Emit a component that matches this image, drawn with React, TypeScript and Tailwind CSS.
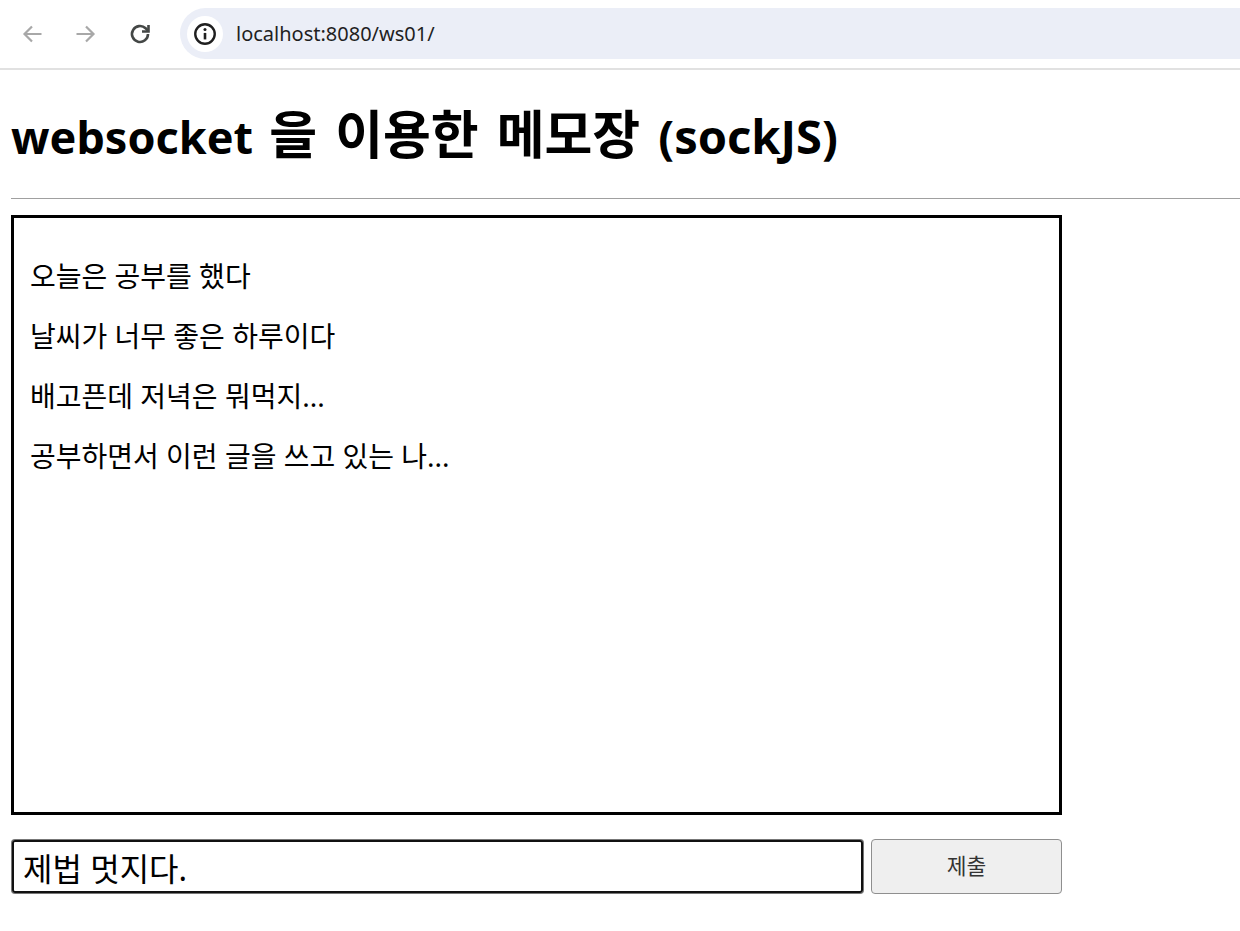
import { useState } from "react";

const FONT = "font-['Noto_Sans','Noto_Sans_CJK_KR',sans-serif]";

const memos = [
  "오늘은 공부를 했다",
  "날씨가 너무 좋은 하루이다",
  "배고픈데 저녁은 뭐먹지...",
  "공부하면서 이런 글을 쓰고 있는 나...",
];

function BrowserBar() {
  return (
    <div className="flex h-[70px] items-start border-b-2 border-[#e1e1e1] bg-white pt-[8px]">
      <div className="flex h-[51px] w-[180px] shrink-0 items-center pl-[20px]">
        <svg width="24" height="24" viewBox="0 0 24 24" fill="none" stroke="#a8a8a8" strokeWidth="2.2">
          <path d="M21.5 12H4.5M12 4.5 4.5 12l7.5 7.5" />
        </svg>
        <svg className="ml-[30px]" width="24" height="24" viewBox="0 0 24 24" fill="none" stroke="#a8a8a8" strokeWidth="2.2">
          <path d="M2.5 12h17M12 4.5l7.5 7.5-7.5 7.5" />
        </svg>
        <svg className="ml-[30px]" width="24" height="24" viewBox="0 0 24 24" fill="none" stroke="#444746" strokeWidth="2.6">
          <path d="M20 12a8 8 0 1 1-2.4-5.7l2.4 2.4" />
          <path d="M20.5 3V9.5H14" />
        </svg>
      </div>
      <div className="flex h-[51px] flex-1 items-center rounded-l-full bg-[#ebeef7] pl-[7px]">
        <div className="flex h-[36px] w-[36px] items-center justify-center rounded-full bg-white">
          <svg width="26" height="26" viewBox="0 0 24 24" fill="none">
            <circle cx="12" cy="12" r="9" stroke="#1f1f1f" strokeWidth="2.2" />
            <path d="M12 11v6" stroke="#1f1f1f" strokeWidth="2.4" />
            <circle cx="12" cy="7.8" r="1.4" fill="#1f1f1f" />
          </svg>
        </div>
        <span className={`ml-[13px] text-[20px] text-[#1f1f1f] ${FONT}`}>localhost:8080/ws01/</span>
      </div>
    </div>
  );
}

export default function App() {
  const [text, setText] = useState("제법 멋지다.");

  return (
    <div className={`min-h-[931px] bg-white text-black ${FONT}`}>
      <BrowserBar />
      <div className="pl-[11px]">
        <h1 className="mt-[31px] h-[66px] text-[52px] leading-[66px] font-bold whitespace-nowrap [word-spacing:4.5px]">
          <span className="text-[45px]">websocket </span>을 이용한 메모장{" "}
          <span className="text-[47px]">(sockJS)</span>
        </h1>
        <hr className="mt-[31px] border-t border-[#a0a0a0]" />
        <div className="mt-[16px] h-[600px] w-[1051px] border-[3px] border-black px-[16px] pt-[40px]">
          {memos.map((m) => (
            <p key={m} className="mb-[24px] text-[28px] leading-[36px]">
              {m}
            </p>
          ))}
        </div>
        <div className="mt-[24px] flex w-[1051px] gap-[7px]">
          <input
            value={text}
            onChange={(e) => setText(e.target.value)}
            className="m-px h-[53px] w-[851px] rounded-[3px] border-2 border-[#111] px-[9px] text-[32px] ring-1 ring-[#777] outline-none"
          />
          <button className="h-[55px] w-[191px] rounded-[4px] border border-[#8f8f8f] bg-[#efefef] text-[21.5px] text-[#333]">
            제출
          </button>
        </div>
      </div>
    </div>
  );
}
